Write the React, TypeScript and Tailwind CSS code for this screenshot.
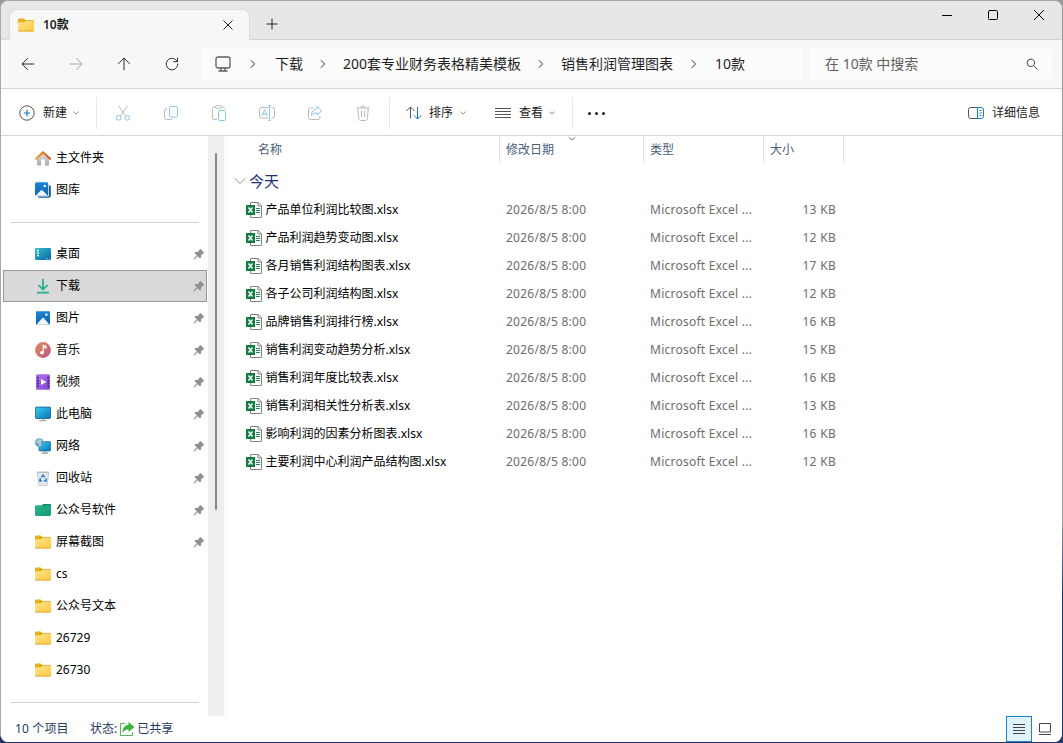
import React from "react";
import { clsx } from "clsx";

type IconName =
  | "home"
  | "gallery"
  | "desktop"
  | "download"
  | "pictures"
  | "music"
  | "video"
  | "pc"
  | "network"
  | "recycle"
  | "greenFolder"
  | "folder";

type NavEntry = { label: string; icon: IconName; pinned?: boolean };

const topEntries: NavEntry[] = [
  { label: "主文件夹", icon: "home" },
  { label: "图库", icon: "gallery" },
];

const quickEntries: NavEntry[] = [
  { label: "桌面", icon: "desktop", pinned: true },
  { label: "下载", icon: "download", pinned: true },
  { label: "图片", icon: "pictures", pinned: true },
  { label: "音乐", icon: "music", pinned: true },
  { label: "视频", icon: "video", pinned: true },
  { label: "此电脑", icon: "pc", pinned: true },
  { label: "网络", icon: "network", pinned: true },
  { label: "回收站", icon: "recycle", pinned: true },
  { label: "公众号软件", icon: "greenFolder", pinned: true },
  { label: "屏幕截图", icon: "folder", pinned: true },
  { label: "cs", icon: "folder" },
  { label: "公众号文本", icon: "folder" },
  { label: "26729", icon: "folder" },
  { label: "26730", icon: "folder" },
];

const files = [
  { name: "产品单位利润比较图.xlsx", size: 13 },
  { name: "产品利润趋势变动图.xlsx", size: 12 },
  { name: "各月销售利润结构图表.xlsx", size: 17 },
  { name: "各子公司利润结构图.xlsx", size: 12 },
  { name: "品牌销售利润排行榜.xlsx", size: 16 },
  { name: "销售利润变动趋势分析.xlsx", size: 15 },
  { name: "销售利润年度比较表.xlsx", size: 16 },
  { name: "销售利润相关性分析表.xlsx", size: 13 },
  { name: "影响利润的因素分析图表.xlsx", size: 16 },
  { name: "主要利润中心利润产品结构图.xlsx", size: 12 },
];

const Gradients = () => (
  <svg className="absolute h-0 w-0">
    <defs>
      <linearGradient id="gFolder" x1="0" y1="0" x2="1" y2="1">
        <stop offset="0" stopColor="#ffe394" />
        <stop offset="1" stopColor="#fdc93f" />
      </linearGradient>
      <linearGradient id="gRoof" x1="0" y1="0" x2="1" y2="0">
        <stop offset="0" stopColor="#f0a33a" />
        <stop offset="1" stopColor="#c9501c" />
      </linearGradient>
      <linearGradient id="gWall" x1="0" y1="0" x2="0" y2="1">
        <stop offset="0" stopColor="#e3e3e3" />
        <stop offset="1" stopColor="#a9a9a9" />
      </linearGradient>
      <linearGradient id="gBlue" x1="0" y1="0" x2="0" y2="1">
        <stop offset="0" stopColor="#1b86d8" />
        <stop offset="1" stopColor="#0a62b0" />
      </linearGradient>
      <linearGradient id="gTeal" x1="0" y1="0" x2="1" y2="1">
        <stop offset="0" stopColor="#2fc3cf" />
        <stop offset="1" stopColor="#0f62a6" />
      </linearGradient>
      <linearGradient id="gScreen" x1="0" y1="0" x2="1" y2="1">
        <stop offset="0" stopColor="#35d0ea" />
        <stop offset="1" stopColor="#0c73bd" />
      </linearGradient>
      <linearGradient id="gMusic" x1="0" y1="0" x2="1" y2="1">
        <stop offset="0" stopColor="#e98a57" />
        <stop offset="1" stopColor="#bb5480" />
      </linearGradient>
      <linearGradient id="gVideo" x1="0" y1="0" x2="1" y2="1">
        <stop offset="0" stopColor="#b274e8" />
        <stop offset="1" stopColor="#8547d8" />
      </linearGradient>
      <linearGradient id="gGreen" x1="0" y1="0" x2="1" y2="1">
        <stop offset="0" stopColor="#30b48d" />
        <stop offset="1" stopColor="#159b7a" />
      </linearGradient>
    </defs>
  </svg>
);

const FolderShape = () => (
  <>
    <path d="M0 2.6Q0 1.5 1.1 1.5h4.3q.6 0 1 .4l1 1.1H15q1 0 1 1v4H0z" fill="#e5ae1f" />
    <path d="M0 6q0-.8.8-.8h5.4q.5 0 .9-.4l.8-.7q.3-.3.8-.3H15q1 0 1 1v8.7q0 1-1 1H1q-1 0-1-1z" fill="url(#gFolder)" />
    <path d="M.1 13.4h15.8q-.2 1.1-1 1.1H1.1q-.8 0-1-1.1z" fill="#e3a92b" />
  </>
);

const iconShapes: Record<IconName, React.ReactNode> = {
  home: (
    <>
      <path d="M2 7.5 8 2.8l6 4.7v7.3q0 .7-.7.7H10V10q0-.6-.6-.6H6.7Q6 9.400 6 10v5.500H2.700q-.7 0-.7-.7z" fill="url(#gWall)" />
      <path d="M1 8.700 8 2.200l7 6.500" stroke="url(#gRoof)" strokeWidth="2.100" fill="none" strokeLinecap="round" strokeLinejoin="round" />
    </>
  ),
  gallery: (
    <>
      <path d="M14 3.200q1.800.2 1.800 1.600v8.500q0 2.500-2.500 2.500H4.600Q3 15.800 2.600 14.500H13q1 0 1-1z" fill="#0d559c" />
      <rect y=".3" width="13.300" height="13.500" rx="1.500" fill="url(#gBlue)" />
      <path d="m.7 13.500 5.300-5.200q.7-.7 1.400 0l5.300 5.200q-.3.300-.9.300H1.600q-.6 0-.9-.3z" fill="#eef7ff" />
      <circle cx="9.800" cy="3.900" r="1.200" fill="#fff" />
    </>
  ),
  desktop: (
    <>
      <rect y="2" width="16" height="12" rx="1.200" fill="url(#gTeal)" />
      <path d="M2 4.500h2M2 7h2M2 9.500h2" stroke="#c9f5f5" strokeWidth="1.300" />
      <path d="M10.500 12.800h4" stroke="#8ad0f0" strokeWidth="1" strokeDasharray="1 .6" />
    </>
  ),
  download: (
    <path d="M8 .8v10.400M3.400 7 8 11.600 12.600 7M2 14.700h12" stroke="#1fae8b" strokeWidth="1.700" fill="none" />
  ),
  pictures: (
    <>
      <rect x="1" y="1.300" width="14" height="13.400" rx="1" fill="url(#gBlue)" />
      <path d="M1.600 14.400 7.300 8q.7-.7 1.400 0l5.700 6.400q-.3.300-.7.300H2.300q-.4 0-.7-.3z" fill="#eef7ff" />
      <circle cx="11.400" cy="4.600" r="1.200" fill="#fff" />
    </>
  ),
  music: (
    <>
      <circle cx="8" cy="8" r="7.900" fill="url(#gMusic)" />
      <ellipse cx="6.900" cy="10.800" rx="1.900" ry="1.700" fill="#fff" />
      <path d="M8.200 10.800V3.300l2.800.8v1.700L8.900 5.300" stroke="#fff" strokeWidth="1.200" fill="none" />
    </>
  ),
  video: (
    <>
      <rect x="1" y=".3" width="14" height="15.400" rx="1.300" fill="url(#gVideo)" />
      <path d="M2.800 2.800v10.500M13.200 2.800v10.500" stroke="#43208c" strokeWidth="1.600" strokeDasharray="1.800 1.100" />
      <path d="M6 4.900v6.200L11.300 8z" fill="#fff" />
    </>
  ),
  pc: (
    <>
      <path d="M8 12v2.500M4.500 14.800h7" stroke="#8d989f" strokeWidth="1.100" />
      <rect x=".4" y="1.100" width="15.200" height="11.400" rx=".8" fill="url(#gScreen)" stroke="#125d89" strokeWidth=".8" />
    </>
  ),
  network: (
    <>
      <path d="M10 12.500v2.300M6.700 15.100H13" stroke="#8d989f" strokeWidth="1.100" />
      <rect x="4" y="3.700" width="11.700" height="9.200" rx=".8" fill="url(#gScreen)" stroke="#125d89" strokeWidth=".7" />
      <circle cx="4.400" cy="4.600" r="4.300" fill="#5f9dbf" />
      <path d="M1 2.800q2 .8 2.500-2Q6 .8 7 2.600 5 5 6.500 7q-2 2-3 1.700Q4.600 5 1 4.800z" fill="#a5d0e0" />
    </>
  ),
  recycle: (
    <>
      <path d="M2.300 2.200h11.400l-1.300 12.600q-.1.700-.8.700H4.400q-.7 0-.8-.7z" fill="#e2e7ea" stroke="#b7bec3" strokeWidth=".7" />
      <path d="M2 2.200h12" stroke="#9fa8ad" strokeWidth=".8" />
      <path d="M6.400 7.200 8 5.200l1.600 2M10.900 8.300l.3 2.500-2.300.2M7 11l-2.300-.2.800-2.500" stroke="#1d82cd" strokeWidth="1.500" fill="none" />
    </>
  ),
  greenFolder: (
    <>
      <path d="M0 4.600q0-1.400 1.400-1.400H7l1.400-1.300h6.200Q16 1.900 16 3.300v9.200q0 1.400-1.400 1.400H1.400Q0 13.900 0 12.500z" fill="url(#gGreen)" />
      <path d="M8.400 1.900h6.200Q16 1.900 16 3.300v.3H6.600z" fill="#108a6b" />
    </>
  ),
  folder: <FolderShape />,
};

const SmallIcon = ({ name }: { name: IconName }) => (
  <svg viewBox="0 0 16 16" className="h-4 w-4 shrink-0">
    {iconShapes[name]}
  </svg>
);

const PinIcon = () => (
  <svg viewBox="0 0 12 12" className="h-3 w-3 shrink-0">
    <path d="M7.300.7 11.300 4.700 10.500 5.500 10 5.400 8.100 7.400 8 9.600 7 10.500 4.700 8.200 1.200 11.500.5 10.800 3.900 7.400 1.500 5 2.500 4 4.700 4 6.600 2 6.500 1.500z" fill="#8b9196" />
  </svg>
);

const ExcelIcon = () => (
  <svg viewBox="0 0 16 16" className="h-4 w-4 shrink-0">
    <path d="M4.500.5h7.800l3.200 3.200v11.800h-11z" fill="#fff" stroke="#858585" />
    <path d="M12 .5V4h3.500" fill="none" stroke="#858585" />
    <path d="M10 6.500h4M10 8.500h4M10 10.500h4" stroke="#187443" strokeWidth=".9" />
    <rect y="3" width="9" height="10" fill="#107c41" />
    <path d="m2.500 5.500 4 5M6.500 5.500l-4 5" stroke="#fff" strokeWidth="1.400" />
  </svg>
);

/* thin line icon, stroke inherits the text colour */
const Line = ({
  d,
  className,
  box = 16,
}: {
  d: string;
  className?: string;
  box?: number;
}) => (
  <svg
    viewBox={`0 0 ${box} ${box}`}
    className={clsx("shrink-0", className)}
    fill="none"
    stroke="currentColor"
    strokeLinecap="round"
    strokeLinejoin="round"
  >
    <path d={d} />
  </svg>
);

const Chevron = () => (
  <Line box={6} d="M.7 1.800 3 4.100 5.300 1.800" className="h-1.5 w-1.5 text-[#909090]" />
);

const TitleBar = () => (
  <div className="flex h-[39px] bg-[#e7e7e7]">
    <div className="w-2 rounded-br-md border-b border-[#d2d2d2]" />
    <div className="mt-2 flex w-[241px] items-center rounded-t-lg border-x border-t border-[#dcdcdc] bg-[#f7f7f7] pl-2 pr-[13px] pb-px">
      <svg viewBox="0 0 16 16" className="h-4 w-4">
        <FolderShape />
      </svg>
      <span className="ml-[9px] flex-1 text-xs font-semibold text-[#1c1c1c]">10款</span>
      <Line d="M3.800 3.800l8.400 8.400M12.200 3.800l-8.400 8.400" className="h-4 w-4 text-[#222]" />
    </div>
    <div className="flex flex-1 border-b border-[#d2d2d2]">
      <Line d="M8 3v10M3 8h10" className="ml-[14px] mt-[15px] h-4 w-4 text-[#222]" />
      <div className="ml-auto mt-1.5 flex gap-[30px] pr-[15px] text-black">
        <Line d="M3.500 8.500h9" className="h-4 w-4" />
        <Line d="M4.500 3.500h7q1 0 1 1v7q0 1-1 1h-7q-1 0-1-1v-7q0-1 1-1z" className="h-4 w-4" />
        <Line d="M3.300 3.300l9.400 9.400M12.700 3.300l-9.400 9.400" className="h-4 w-4" />
      </div>
    </div>
  </div>
);

const Separator = () => (
  <Line d="M6 4.500 9.700 8 6 11.500" className="h-4 w-4 text-[#333]" />
);

const AddressBar = () => (
  <div className="flex h-[49px] items-center border-b border-[#d4d4d4] bg-[#f7f7f7] text-sm text-[#1f1f1f]">
    <div className="flex w-[201px] gap-8 pl-[19px]">
      <Line d="M13.900 8H2.300M7.500 2.600 2 8l5.500 5.400" className="h-4 w-4 text-[#2b2b2b]" />
      <Line d="M2.100 8h11.600M8.500 2.600 14 8l-5.500 5.400" className="h-4 w-4 text-[#a8a8a8]" />
      <Line d="M8 13.800V2.300M2.600 7.600 8 2l5.400 5.600" className="h-4 w-4 text-[#2b2b2b]" />
      <Line d="M13.200 5.500A5.800 5.800 0 1 0 13.800 8M13.500 2v3.700H9.800" className="h-4 w-4 text-[#2b2b2b]" />
    </div>
    <div className="flex h-8 w-[601px] items-center rounded bg-[#fcfcfc] pl-3">
      <svg viewBox="0 0 18 18" className="h-[18px] w-[18px]" fill="none" stroke="#5b5b5b" strokeWidth="1.300">
        <rect x="2" y="2" width="14" height="11" rx="2" />
        <path d="M7 13v2.500M11 13v2.500M4.500 16h9" />
      </svg>
      <span className="w-[43px] pl-[13px]"><Separator /></span>
      <span className="w-[28px]">下载</span>
      <span className="w-[40px] pl-3"><Separator /></span>
      <span className="w-[178px] whitespace-nowrap">200套专业财务表格精美模板</span>
      <span className="w-[40px] pl-3"><Separator /></span>
      <span className="w-[112px] whitespace-nowrap">销售利润管理图表</span>
      <span className="w-[42px] pl-[13px]"><Separator /></span>
      <span>10款</span>
    </div>
    <div className="ml-[7px] flex h-8 w-[242px] items-center justify-between rounded bg-[#fcfcfc] pl-[15px] pr-3 text-[#606060]">
      <span>在 10款 中搜索</span>
      <Line d="M10.500 6.800a3.700 3.700 0 1 1-7.400 0 3.700 3.700 0 0 1 7.400 0zM9.600 9.500l3.600 3.600" className="h-4 w-4 text-[#444]" />
    </div>
  </div>
);

const ToolIcons = () => (
  <div className="flex w-[292px] items-center gap-8 pl-[18px]">
    <svg viewBox="0 0 16 16" className="h-4 w-4" fill="none" stroke="#b9b9b9">
      <path d="M3.500.8 10.700 11M12.500.8 5.300 11" />
      <circle cx="3.700" cy="12.800" r="2.400" stroke="#8dc5ea" />
      <circle cx="12.300" cy="12.800" r="2.400" stroke="#8dc5ea" />
    </svg>
    <svg viewBox="0 0 16 16" className="h-4 w-4" fill="none" stroke="#b9b9b9">
      <path d="M4.500 4H3Q1.500 4 1.500 6v6.500q0 2 2 2h4q1.700 0 2-1.700" />
      <rect x="6.500" y="1.500" width="8" height="10.500" rx="1.800" stroke="#8dc5ea" />
    </svg>
    <svg viewBox="0 0 16 16" className="h-4 w-4" fill="none" stroke="#b9b9b9">
      <path d="M5 2H3Q1.500 2 1.500 3.500V13q0 1.500 1.500 1.500h3M11 2h1.300q1.200 0 1.200 1.500" />
      <rect x="4.500" y=".7" width="6" height="2.600" rx="1.200" />
      <rect x="7.500" y="5.500" width="7" height="10" rx="1.300" stroke="#8dc5ea" />
    </svg>
    <svg viewBox="0 0 16 16" className="h-4 w-4" fill="none" stroke="#b9b9b9">
      <path d="M9 2.500H2.500Q.5 2.500.5 4.500v6.500q0 2 2 2H9M12.500 2.500h1q2 0 2 2V11q0 2-2 2h-1" />
      <path d="M3 11 5.600 4.700 8.200 11M3.900 8.900h3.400M10.500.7v14.600M9 .7h3M9 15.300h3" stroke="#8dc5ea" />
    </svg>
    <svg viewBox="0 0 16 16" className="h-4 w-4" fill="none" stroke="#b9b9b9">
      <path d="M6 3H3.500q-2 0-2 2v7.500q0 2 2 2H11q2 0 2-2V11" />
      <path d="M10 1.500 14.700 5.800 10 10V7.800Q6.500 7.500 4.500 10.500q.3-6.200 5.500-6.700z" stroke="#8dc5ea" strokeLinejoin="round" />
    </svg>
    <svg viewBox="0 0 16 16" className="h-4 w-4" fill="none" stroke="#b9b9b9">
      <path d="M1.500 3h13M5.500 3q0-2 2.500-2t2.500 2M2.700 3l1 10.500q.2 2 2 2h4.600q1.800 0 2-2l1-10.500M6.500 6v6M9.500 6v6" />
    </svg>
  </div>
);

const Toolbar = () => (
  <div className="flex h-[47px] items-center border-b border-[#d6d6d6] bg-white pt-0.5 text-xs text-[#1a1a1a]">
    <div className="flex w-[95px] items-center pl-[18px]">
      <svg viewBox="0 0 16 16" className="h-4 w-4" fill="none">
        <circle cx="8" cy="8" r="7.200" stroke="#555" />
        <path d="M8 4.800v6.400M4.800 8h6.400" stroke="#0f78c8" strokeWidth="1.200" />
      </svg>
      <span className="ml-2 mr-1.5">新建</span>
      <Chevron />
    </div>
    <div className="h-8 border-l border-[#e8e8e8]" />
    <ToolIcons />
    <div className="h-8 border-l border-[#e8e8e8]" />
    <div className="flex w-[182px] items-center pl-[15px]">
      <svg viewBox="0 0 18 16" className="h-4 w-[18px]" fill="none">
        <path d="M5.500 13.500V2M1.500 6l4-4 4 4" stroke="#555" />
        <path d="M12.500 2v12M8.700 10.200l3.800 3.800 3.800-3.800" stroke="#0f78c8" />
      </svg>
      <span className="ml-[6px] mr-[7px]">排序</span>
      <Chevron />
      <svg viewBox="0 0 16 16" className="ml-[29px] h-4 w-4 text-[#555]" fill="none" stroke="currentColor">
        <path d="M0 3.500h16M0 6.500h16M0 9.500h16M0 12.500h16" />
      </svg>
      <span className="ml-2 mr-1.5">查看</span>
      <Chevron />
    </div>
    <div className="h-8 border-l border-[#e8e8e8]" />
    <div className="ml-[15px] flex gap-1">
      <i className="h-[3px] w-[3px] rounded-full bg-[#222]" />
      <i className="h-[3px] w-[3px] rounded-full bg-[#222]" />
      <i className="h-[3px] w-[3px] rounded-full bg-[#222]" />
    </div>
    <div className="ml-auto flex items-center pr-[22px]">
      <svg viewBox="0 0 16 16" className="mr-2 h-4 w-4" fill="none">
        <path d="M9.500 2.500H2.700Q.5 2.500.5 4.700v6.600q0 2.200 2.200 2.200h6.800" stroke="#555" />
        <path d="M9.500 2.500h3.800q2.200 0 2.200 2.200v6.600q0 2.200-2.200 2.200H9.500zM11.500 5.500h2M11.500 8h2M11.500 10.500h2" stroke="#0f78c8" />
      </svg>
      <span>详细信息</span>
    </div>
  </div>
);

const NavRow = ({ entry, active }: { entry: NavEntry; active?: boolean }) => (
  <div
    className={clsx(
      "ml-0.5 flex h-8 w-[204px] items-center border pl-[31px] pr-px",
      active ? "border-[#999] bg-[#d9d9d9]" : "border-transparent",
    )}
  >
    <SmallIcon name={entry.icon} />
    <span className="ml-[5px] flex-1">{entry.label}</span>
    {entry.pinned && <PinIcon />}
  </div>
);

const NavDivider = () => (
  <div className="ml-[10px] flex h-8 w-[188px] shrink-0 items-center">
    <div className="h-px flex-1 bg-[#d0d0d0]" />
  </div>
);

const Sidebar = () => (
  <div className="flex w-[224px] shrink-0 bg-white">
    <nav className="w-[207px] overflow-hidden pt-1.5 text-xs text-black">
      {topEntries.map((entry) => (
        <NavRow key={entry.label} entry={entry} />
      ))}
      <NavDivider />
      {quickEntries.map((entry) => (
        <NavRow key={entry.label} entry={entry} active={entry.icon === "download"} />
      ))}
      <NavDivider />
    </nav>
    <div className="flex w-4 justify-center bg-[#eeeeee] pt-[17px]">
      <div className="h-[357px] w-0.5 rounded-full bg-[#858585]" />
    </div>
  </div>
);

const FileList = () => (
  <div className="flex-1 border-l border-[#f3f3f3] text-xs">
    <div className="flex h-[27px] items-center text-[#4c607a]">
      <span className="flex h-full w-[274px] items-center border-r border-[#e2e2e2] pl-8">名称</span>
      <span className="relative flex h-full w-[144px] items-center border-r border-[#e2e2e2] pl-1.5">
        修改日期
        <Line box={8} d="M1 2.500 4 5l3-2.500" className="absolute left-[68px] -top-px h-2 w-2 text-[#777]" />
      </span>
      <span className="flex h-full w-[120px] items-center border-r border-[#e2e2e2] pl-1.5">类型</span>
      <span className="flex h-full w-20 items-center border-r border-[#e2e2e2] pl-1.5">大小</span>
    </div>
    <div className="flex h-[33px] items-center pl-2 pt-0.5 text-[15px] text-[#1e2f7d]">
      <Line box={12} d="M1 3.500 6 8.500l5-5" className="mr-[3px] h-3 w-3 text-[#8a8a8a]" />
      今天
    </div>
    {files.map((file) => (
      <div key={file.name} className="flex h-7 items-center text-[#6d6d6d]">
        <div className="flex w-[280px] items-center gap-[3.5px] pl-5 text-black">
          <ExcelIcon />
          <span>{file.name}</span>
        </div>
        <span className="w-[144px] tracking-[0.25px]">2026/8/5 8:00</span>
        <span className="w-[120px] tracking-[0.25px]">Microsoft Excel ...</span>
        <span className="w-[66px] text-right tracking-[0.3px]">{file.size} KB</span>
      </div>
    ))}
  </div>
);

const StatusBar = () => (
  <div className="flex h-[26px] items-center bg-white pl-[14px] text-xs text-[#1f3a63]">
    <span className="w-[75px] tracking-[0.15px]">10 个项目</span>
    <span>状态:</span>
    <svg viewBox="0 0 16 16" className="ml-0.5 mr-0.5 h-4 w-4">
      <path d="M6 2.500H1.500v12h12V11" fill="none" stroke="#55b552" />
      <path d="M9.500 1 15.500 6l-6 5V8.300Q6 8.300 3.500 12q0-7.500 6-8.300z" fill="#3fae3c" />
    </svg>
    <span>已共享</span>
    <div className="ml-auto flex h-full items-start pr-[11px]">
      <div className="flex h-[26px] w-[26px] items-center justify-center border border-[#1c83c6] bg-[#e0f3fc]">
        <svg viewBox="0 0 12 12" className="h-3 w-3" stroke="#444">
          <path d="M0 1.500h12M0 4.500h12M0 7.500h12M0 10.500h12" />
        </svg>
      </div>
      <svg viewBox="0 0 12 12" className="ml-[7px] mt-[7px] h-3 w-3" fill="none" stroke="#444">
        <path d="M.5.5h11v8.500H.5zM0 11.500h12" />
      </svg>
    </div>
  </div>
);

const App = () => (
  <div className="flex h-[743px] w-[1063px] bg-gradient-to-b from-[#9a9a9a] from-70% to-[#23366b] to-80% pr-px pb-px font-['Noto_Sans','Noto_Sans_CJK_SC',sans-serif]">
    <Gradients />
    <div className="flex flex-1 flex-col overflow-hidden rounded-lg border-l border-t border-[#a8a8a8] bg-white">
      <TitleBar />
      <AddressBar />
      <Toolbar />
      <div className="flex min-h-0 flex-1">
        <Sidebar />
        <FileList />
      </div>
      <StatusBar />
    </div>
  </div>
);

export default App;
